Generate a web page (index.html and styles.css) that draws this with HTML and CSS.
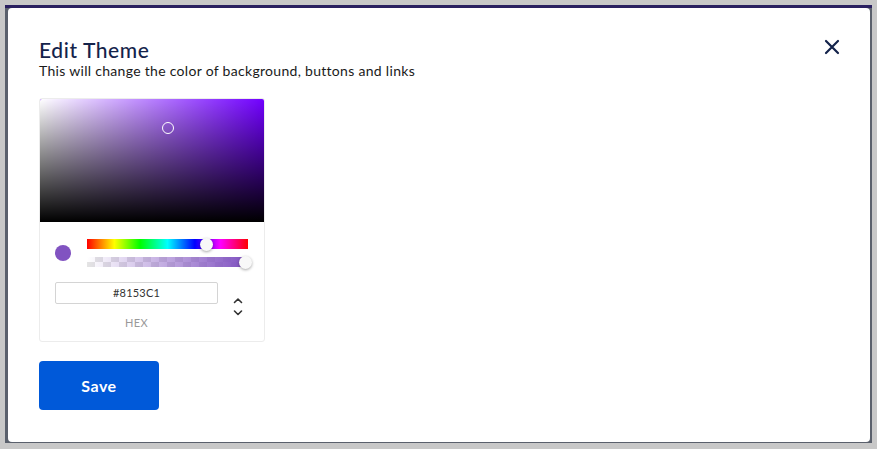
FILE: index.html
```html
<!DOCTYPE html>
<html lang="en">
<head>
<meta charset="utf-8">
<title>Edit Theme</title>
<link rel="stylesheet" href="styles.css">
</head>
<body>
<div class="backdrop">
  <div class="modal">
    <div class="header">
      <div class="titles">
        <h1 class="title">Edit Theme</h1>
        <p class="subtitle">This will change the color of background, buttons and links</p>
      </div>
      <button class="close" aria-label="Close">
        <svg width="16" height="16" viewBox="0 0 16 16"><path d="M2 2 L14 14 M14 2 L2 14" stroke="#14234b" stroke-width="2.2" stroke-linecap="round" fill="none"/></svg>
      </button>
    </div>

    <div class="picker">
      <div class="saturation">
        <div class="sat-white"></div>
        <div class="sat-black"></div>
        <div class="sat-pointer"></div>
      </div>
      <div class="controls">
        <div class="swatch"></div>
        <div class="sliders">
          <div class="hue"><div class="thumb thumb-hue"></div></div>
          <div class="alpha"><div class="alpha-fill"></div><div class="thumb thumb-alpha"></div></div>
        </div>
      </div>
      <div class="fields">
        <div class="field">
          <div class="hex-input">#8153C1</div>
          <div class="hex-label">HEX</div>
        </div>
        <div class="toggle">
          <svg width="12" height="22" viewBox="0 0 12 22"><path d="M2.5 6.5 L6 3 L9.5 6.5" stroke="#333" stroke-width="1.6" fill="none" stroke-linecap="round" stroke-linejoin="round"/><path d="M2.5 15 L6 18.5 L9.5 15" stroke="#333" stroke-width="1.6" fill="none" stroke-linecap="round" stroke-linejoin="round"/></svg>
        </div>
      </div>
    </div>

    <button class="save">Save</button>
  </div>
</div>
</body>
</html>
```

FILE: styles.css
```css
* { box-sizing: border-box; }
html, body { margin: 0; height: 100%; }
body {
  background: #c8c8c8;
  padding: 5px 5px 6px 5px;
  font-family: "Lato", "Noto Sans", sans-serif;
}
.backdrop {
  height: 100%;
  background: linear-gradient(#2a2060 0 3px, #5a606c 3px);
  padding: 3px 2px 1px 3px;
}
.modal {
  height: 100%;
  background: #fff;
  border-radius: 4px;
  padding: 30px 30px 0 31px;
  display: flex;
  flex-direction: column;
  align-items: flex-start;
}
.header {
  width: 100%;
  display: flex;
  justify-content: space-between;
  align-items: flex-start;
}
.title {
  margin: 0;
  font-family: "Lato", sans-serif;
  font-weight: 500;
  font-size: 21px;
  line-height: 24px;
  color: #14234b;
  letter-spacing: 0.6px;
}
.subtitle {
  margin: 1px 0 0;
  font-family: "Lato", sans-serif;
  font-size: 14px;
  line-height: 16px;
  color: #1a1a1a;
  letter-spacing: 0.3px;
}
.close {
  border: 0;
  background: none;
  padding: 0;
  margin: 1px 0 0 0;
  width: 16px;
  height: 16px;
  cursor: pointer;
}
.picker {
  margin-top: 19px;
  width: 226px;
  border: 1px solid #ececec;
  border-radius: 3px;
  overflow: hidden;
  background: #fff;
  padding-bottom: 12px;
}
.saturation {
  position: relative;
  height: 123px;
  background: #7100ff;
}
.sat-white {
  position: absolute; inset: 0;
  background: linear-gradient(to right, #fff, rgba(255,255,255,0));
}
.sat-black {
  position: absolute; inset: 0;
  background: linear-gradient(to top, #000, rgba(0,0,0,0));
}
.sat-pointer {
  position: absolute;
  left: 122px; top: 23px;
  width: 12px; height: 12px;
  border-radius: 50%;
  border: 1.5px solid #fff;
}
.controls {
  display: flex;
  align-items: center;
  padding: 17px 16px 0 15px;
  gap: 16px;
}
.swatch {
  width: 16px; height: 16px;
  border-radius: 50%;
  background: #8153c1;
  flex: none;
}
.sliders {
  flex: 1;
  display: flex;
  flex-direction: column;
  gap: 8px;
}
.hue {
  position: relative;
  height: 10px;
  background: linear-gradient(to right, #f00 0%, #ff0 17%, #0f0 33%, #0ff 50%, #00f 67%, #f0f 83%, #f00 100%);
}
.alpha {
  position: relative;
  height: 10px;
  margin-right: 2px;
  background: repeating-conic-gradient(#e4e4e4 0 25%, #fff 0 50%) 0 0 / 16px 10px;
}
.alpha-fill {
  position: absolute; inset: 0;
  background: linear-gradient(to right, rgba(129,83,193,0), #8153c1);
}
.thumb {
  position: absolute;
  top: 50%;
  width: 13px; height: 13px;
  margin: -6.5px 0 0 -6.5px;
  border-radius: 50%;
  background: #f8f8f8;
  box-shadow: 0 1px 3px rgba(0,0,0,0.35);
}
.thumb-hue { left: 119px; }
.thumb-alpha { left: 158px; }
.fields {
  display: flex;
  align-items: flex-start;
  padding: 15px 0 0 15px;
}
.field {
  width: 163px;
  display: flex;
  flex-direction: column;
  align-items: center;
}
.hex-input {
  width: 100%;
  height: 22px;
  border: 1px solid #d4d4d4;
  border-radius: 2px;
  font-family: "Lato", sans-serif;
  font-size: 11px;
  color: #333;
  text-align: center;
  line-height: 20px;
  letter-spacing: 0.2px;
}
.hex-label {
  margin-top: 13px;
  font-family: "Lato", sans-serif;
  font-size: 11px;
  color: #999;
  letter-spacing: 0.3px;
  line-height: 12px;
}
.toggle {
  margin: 14px 0 0 14px;
  width: 12px;
  height: 22px;
}
.save {
  margin-top: 19px;
  width: 120px;
  height: 49px;
  border: 0;
  border-radius: 4px;
  background: #0059d9;
  color: #fff;
  font-family: "Lato", sans-serif;
  font-weight: 700;
  font-size: 16px;
  letter-spacing: 0.5px;
  cursor: pointer;
}
```
